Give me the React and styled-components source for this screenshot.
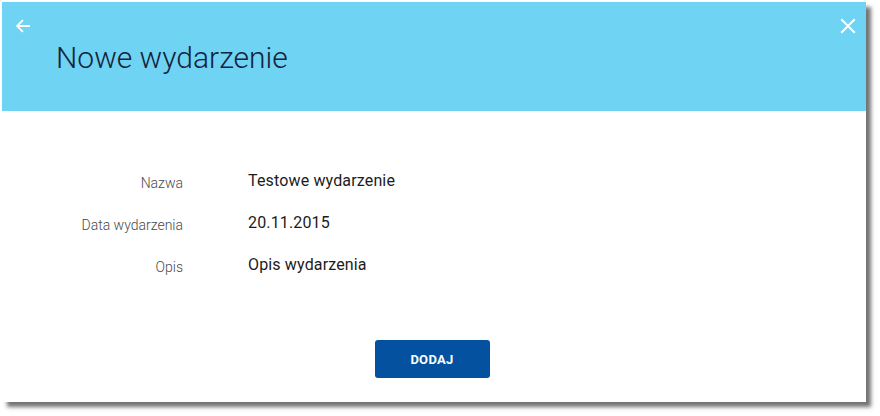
import React from 'react'
import styled, { createGlobalStyle } from 'styled-components'

const Global = createGlobalStyle`
  html, body { margin: 0; padding: 0; background: #fff; }
  body { font-family: Roboto, "Liberation Sans", sans-serif; }
`

const Page = styled.div`
  width: 880px;
  height: 416px;
  padding: 2px 0 0 2px;
  box-sizing: border-box;
`

const Dialog = styled.div`
  width: 864px;
  height: 400px;
  background: #fff;
  box-shadow: 5px 5px 4px rgba(0, 0, 0, 0.55);
  display: flex;
  flex-direction: column;
`

const Header = styled.div`
  position: relative;
  height: 109px;
  background: #6fd3f4;
  display: flex;
  align-items: center;
  padding: 2px 0 0 54px;
  box-sizing: border-box;
`

const Title = styled.h1`
  margin: 0;
  font-family: Roboto, sans-serif;
  font-weight: 300;
  font-size: 30px;
  color: #14243a;
`

const IconButton = styled.button`
  position: absolute;
  top: ${p => p.$top}px;
  ${p => p.$side}: ${p => p.$offset}px;
  background: none;
  border: 0;
  padding: 0;
  width: 20px;
  height: 20px;
  display: flex;
  align-items: center;
  justify-content: center;
  cursor: pointer;
`

const Body = styled.div`
  flex: 1;
  display: flex;
  flex-direction: column;
  align-items: center;
  padding-top: 62px;
`

const Fields = styled.dl`
  align-self: stretch;
  display: grid;
  grid-template-columns: 181px 1fr;
  column-gap: 65px;
  row-gap: 22px;
  margin: 0;
`

const Label = styled.dt`
  text-align: right;
  font-size: 14px;
  color: #4a4a4a;
  font-weight: 300;
  line-height: 20px;
`

const Value = styled.dd`
  margin: 0;
  font-size: 16px;
  letter-spacing: 0.15px;
  color: #1c1c1c;
  line-height: 20px;
  position: relative;
  top: -2px;
`

const Button = styled.button`
  margin-top: 63px;
  margin-right: 4px;
  width: 115px;
  height: 38px;
  background: #0451a0;
  border: 0;
  border-radius: 3px;
  color: #fff;
  font-family: Roboto, sans-serif;
  font-weight: 700;
  font-size: 13px;
  letter-spacing: 0.3px;
  cursor: pointer;
`

const fields = [
  ['Nazwa', 'Testowe wydarzenie'],
  ['Data wydarzenia', '20.11.2015'],
  ['Opis', 'Opis wydarzenia'],
]

export default function App() {
  return (
    <Page>
      <Global />
      <Dialog>
        <Header>
          <IconButton $top={14} $side="left" $offset={11} aria-label="back">
            <svg width="18" height="18" viewBox="0 0 24 24" fill="none" stroke="#fff" strokeWidth="2.4" strokeLinecap="square">
              <path d="M20 12H5M11 5l-7 7 7 7" />
            </svg>
          </IconButton>
          <IconButton $top={14} $side="right" $offset={8} aria-label="close">
            <svg width="18" height="18" viewBox="0 0 24 24" fill="none" stroke="#fff" strokeWidth="2.6">
              <path d="M3 3l18 18M21 3L3 21" />
            </svg>
          </IconButton>
          <Title>Nowe wydarzenie</Title>
        </Header>
        <Body>
          <Fields>
            {fields.map(([l, v]) => (
              <React.Fragment key={l}>
                <Label>{l}</Label>
                <Value>{v}</Value>
              </React.Fragment>
            ))}
          </Fields>
          <Button>DODAJ</Button>
        </Body>
      </Dialog>
    </Page>
  )
}
